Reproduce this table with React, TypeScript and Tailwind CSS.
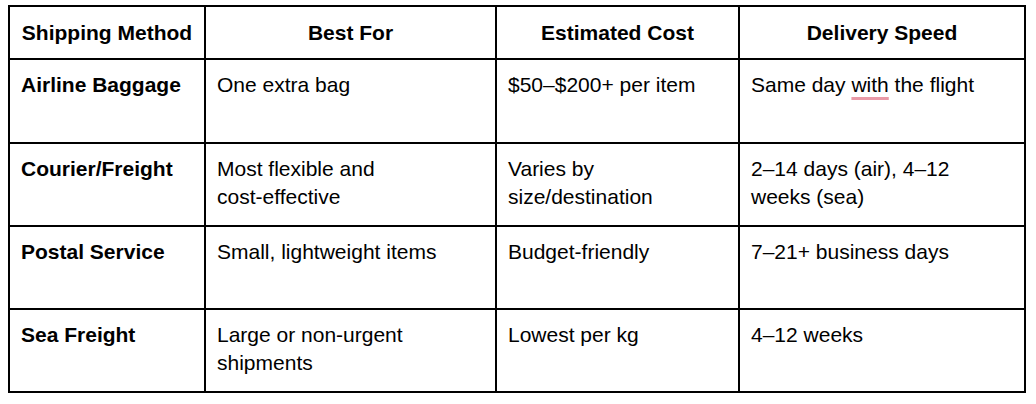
import React from 'react';

type Row = {
    method: string;
    bestFor: React.ReactNode;
    cost: string;
    speed: React.ReactNode;
};

const rows: Row[] = [
    {
        method: 'Airline Baggage',
        bestFor: 'One extra bag',
        cost: '$50–$200+ per item',
        speed: (
            <>
                Same day{' '}
                <span className="underline decoration-[#e99aa7] decoration-[3px] underline-offset-[5px] [text-decoration-skip-ink:none]">with</span>{' '}
                the flight
            </>
        ),
    },
    {
        method: 'Courier/Freight',
        bestFor: (
            <>
                Most flexible and <span className="whitespace-nowrap">cost-effective</span>
            </>
        ),
        cost: 'Varies by size/destination',
        speed: '2–14 days (air), 4–12 weeks (sea)',
    },
    {
        method: 'Postal Service',
        bestFor: 'Small, lightweight items',
        cost: 'Budget-friendly',
        speed: '7–21+ business days',
    },
    {
        method: 'Sea Freight',
        bestFor: 'Large or non-urgent shipments',
        cost: 'Lowest per kg',
        speed: '4–12 weeks',
    },
];

const headers = ['Shipping Method', 'Best For', 'Estimated Cost', 'Delivery Speed'];

const cell = 'border-r-2 border-b-2 border-black px-[11px] pt-[11px] text-[21px] leading-[28px] text-black';

const App: React.FC = () => {
    return (
        <div className="h-[404px] w-[1036px] bg-white pl-[8px] pt-[5px] font-['Liberation_Sans',Arial,sans-serif]">
            <div className="grid w-max grid-cols-[196px_291px_243px_286px] border-l-2 border-t-2 border-black">
                {headers.map(h => (
                    <div key={h} className={`${cell} h-[53px] pt-[12px] text-center font-bold`}>
                        {h}
                    </div>
                ))}
                {rows.map((r, i) => (
                    <React.Fragment key={r.method}>
                        <div className={`${cell} ${i === 0 ? 'h-[84px]' : 'h-[83px]'} font-bold`}>{r.method}</div>
                        <div className={cell}>{r.bestFor}</div>
                        <div className={cell}>{r.cost}</div>
                        <div className={cell}>{r.speed}</div>
                    </React.Fragment>
                ))}
            </div>
        </div>
    );
};

export default App;
